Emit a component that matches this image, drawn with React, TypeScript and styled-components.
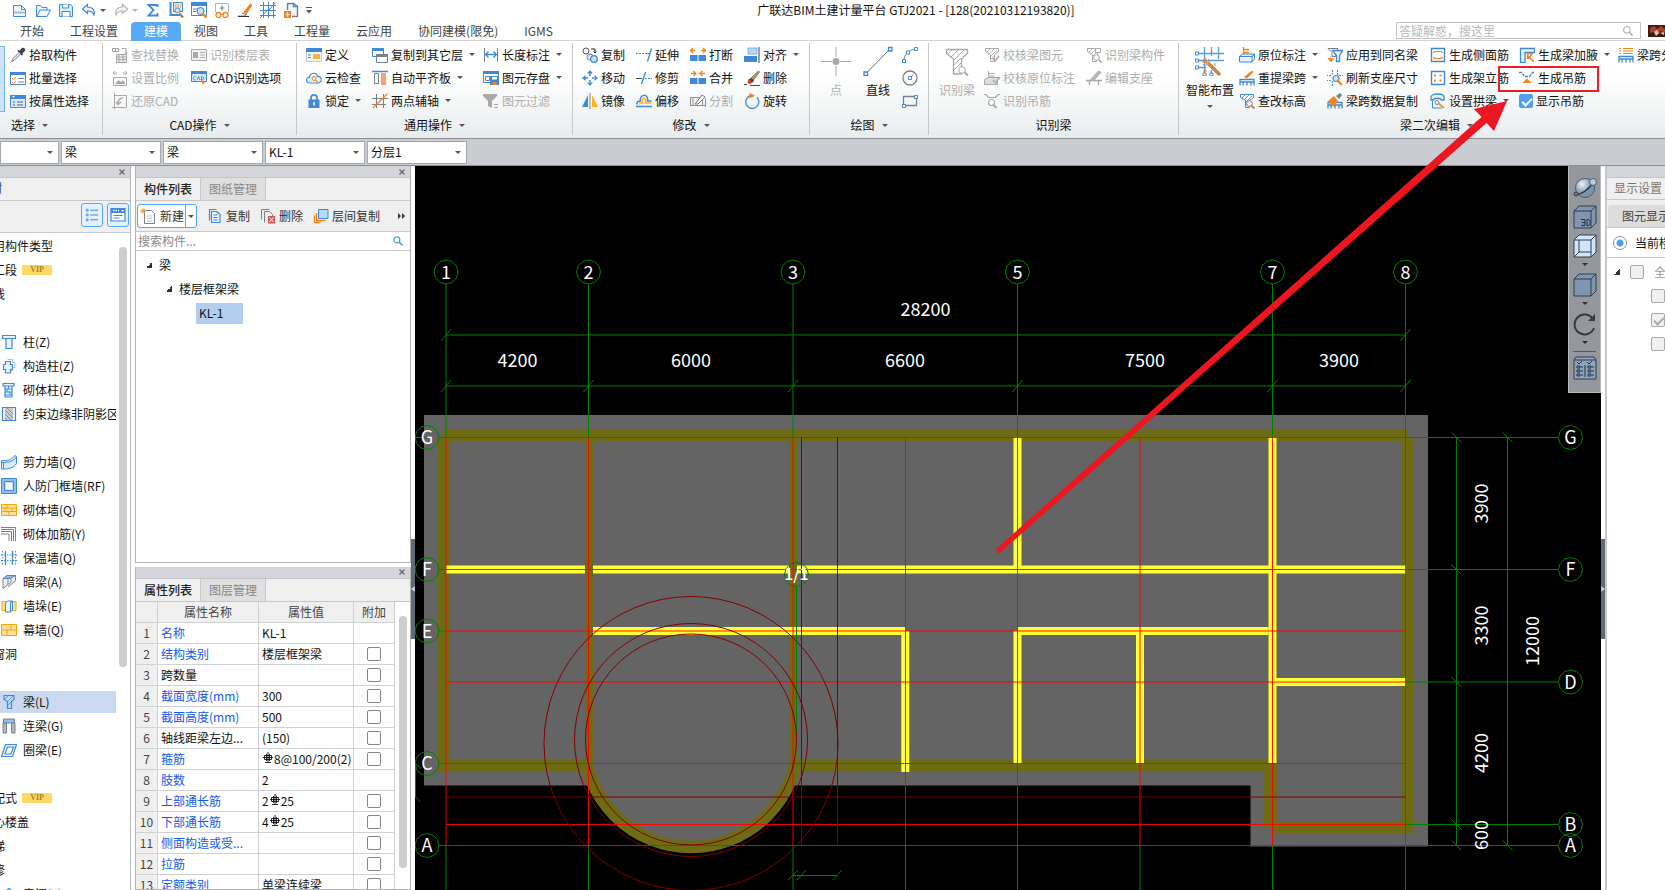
import React from 'react';
import styled, { createGlobalStyle, css } from 'styled-components';

const BLUE = '#3f8ad8';
const ORANGE = '#f5821f';
const GRAY = '#a9a9a9';
const SLATE = '#76838f';

const Global = createGlobalStyle`
  * { box-sizing: border-box; }
  html, body { margin: 0; padding: 0; }
  body {
    font: 12px/18px "Noto Sans CJK SC", "Noto Sans", sans-serif;
    color: #111;
    background: #fff;
  }
  button, input, select { font: inherit; color: inherit; margin: 0; }
  button { border: 0; padding: 0; background: none; cursor: pointer; }
`;

/* ---------- icons ---------- */

type Glyph = React.ReactNode;

const funnel = (c: string, lens: string | null): Glyph => (
  <>
    <path d="M1.5 1.5h13v3l-4 3v7h-4v-7l-5-3z" fill="none" stroke={c} />
    <path d="M3 5l3-3M5 7l5-5M7 9l6-6M7 12l3-3" stroke={c} strokeWidth=".8" />
    {lens && <><circle cx="10.5" cy="10.5" r="2.8" fill="#fff" stroke={lens} /><path d="M12.5 12.5l3 3" stroke={lens} strokeWidth="1.6" /></>}
  </>
);

const bench = (c: string): Glyph => <path d="M1 15.500V9.500h14V15.500M4 15.500V12M8 15.500V12M12 15.500V12M1 12h14" fill="none" stroke={c} strokeWidth="1.300" />;

const glyphs: Record<string, Glyph> = {
  newDoc: <><path d="M1.500 3.500h8l4 4v7h-12zM9.500 3.500v4h4" fill="#eef5fd" stroke={BLUE} /><path d="M2 9.500h11.500v2H2z" fill={BLUE} opacity=".5" /></>,
  open: <path d="M1.500 14.500v-11h4l1.500 2h5v2.500M1.500 14.500l3.500-6.500h10.500l-3.500 6.500z" fill="#eef5fd" stroke={BLUE} />,
  save: <><path d="M1.500 2.500h11l2 2v10h-13z" fill="#dcebfa" stroke={BLUE} /><path d="M4.500 2.500v3.500h6v-3.500M4 14.500v-5h8v5" fill="#fff" stroke={BLUE} /></>,
  undo: <path d="M6.500 2.500L1.500 7l5 4.500V9c4 0 5.500 1 6.500 4 1.500-4-1-8-6.500-8z" fill="#eef5fd" stroke={BLUE} strokeWidth="1.200" />,
  redo: <path d="M9.500 2.500L14.500 7l-5 4.500V9c-4 0-5.500 1-6.500 4-1.500-4 1-8 6.500-8z" fill="#f6f6f6" stroke="#b5b5b5" strokeWidth="1.200" />,
  sum: <path d="M12.500 5V3h-9l5 5-5 5.500h9V11" fill="none" stroke={BLUE} strokeWidth="1.800" />,
  calcView: <><path d="M2.500 0v13h10" fill="none" stroke={BLUE} strokeWidth="2" /><path d="M5.500.5h9v9h-9z" fill="#dcebfa" stroke={BLUE} /><path d="M7 3h6M7 5h6" stroke={ORANGE} strokeDasharray="1.500 1" /><circle cx="9.500" cy="8.500" r="2.500" fill="#cfe3f8" stroke={SLATE} /><path d="M11.500 11.500l3.500 4" stroke="#c8773a" strokeWidth="2.500" /></>,
  find: <><path d="M.5 1.500h15v12H.5z" fill="#fff" stroke={BLUE} /><path d="M0 0h16v4H0z" fill={BLUE} /><path d="M2 7h4M2 9.500h3" stroke={BLUE} /><circle cx="9.500" cy="9" r="3.500" fill="#cfe3f8" stroke="#3b6fb0" /><path d="M12 12l3.500 3.500" stroke={ORANGE} strokeWidth="2.500" /></>,
  glasses: <><path d="M1.500 10V1.500h13V10" fill="none" stroke="#aab6c2" /><path d="M8 3.500v5M5.500 6h5" stroke={SLATE} strokeWidth="1.200" /><circle cx="4.500" cy="13" r="2.500" fill="none" stroke={ORANGE} strokeWidth="1.300" /><circle cx="11.500" cy="13" r="2.500" fill="none" stroke={ORANGE} strokeWidth="1.300" /><path d="M7 12.500h2" stroke={ORANGE} /></>,
  brush: <><path d="M7 10l6.500-8 1.500 1-5.500 8.500z" fill={ORANGE} stroke={ORANGE} /><path d="M5 11l4 1.500-1.500 1.500H1" fill="none" stroke={SLATE} strokeWidth="1.200" /><path d="M1 14.500h11" stroke="#333" /></>,
  grid: <path d="M3.500 0v16M8.500 0v16M13.500 0v16M0 3.500h16M0 8.500h16M0 13.500h16M0 16L9 6.500M8.500 8.500l7-8" fill="none" stroke={BLUE} />,
  docPlus: <><path d="M4.500 8V1.500h6v3h4v10H9" fill="#eef5fd" stroke={SLATE} strokeWidth="1.400" /><path d="M10.500 1.500l4 3" stroke={BLUE} strokeWidth="1.500" /><path d="M1 9h7v7H1z" fill={ORANGE} /><path d="M4.500 10.500v4M2.500 12.500h4" stroke="#fff" strokeWidth="1.200" /></>,
  picker: <><path d="M9 4l3-3c2-1 4 1 3 3l-3 3z" fill="#444" /><path d="M8 3.500l4.500 4.500" stroke="#333" strokeWidth="1.600" /><path d="M9 5.500L3 11.500 1.500 14.500 4.500 13l6-6" fill="#dcebfa" stroke={SLATE} /></>,
  batch: <><path d="M.5 2.500h15v12H.5z" fill="#fff" stroke={BLUE} /><path d="M0 2h16v3H0z" fill={BLUE} /><path d="M2 8l1.500 1.500L6 7M2 12l1.500 1.500L6 11" fill="none" stroke={ORANGE} /><path d="M8 8.500h6M8 12h6" stroke={SLATE} /></>,
  attr: <><path d="M.5 2.500h15v12H.5z" fill="#dcebfa" stroke={BLUE} /><path d="M0 2h16v4H0z" fill={BLUE} /><path d="M2 3h3l-1.500 2z" fill="#fff" /><path d="M3 9h2M7 9h6M3 12h2M7 12h6" stroke="#3a5f8a" /></>,
  replace: <><path d="M.5 1.500h3v3h-3zM3.500 1.500h3v3h-3zM10 1.500h4v4" fill="none" stroke={GRAY} /><path d="M14 7V4M12.500 5.500l1.500 2 1.500-2" stroke={GRAY} fill="none" /><path d="M4.500 7.500h10v8h-10zM7 7.500v8M4.500 10h10M4.500 12.500h10M11 7.500v8" fill="#eee" stroke={GRAY} /></>,
  ratio: <><path d="M1 3h4M11 3h4M3 1L1 3l2 2M13 1l2 2-2 2" fill="none" stroke={GRAY} /><path d="M1.500 7.500h13v8h-13z" fill="none" stroke={GRAY} /><path d="M3 14l3.500-4 2.500 2 2-2 2.500 4z" fill={GRAY} /></>,
  restore: <><path d="M2.500 0v16M0 14.500h14M2.500 2.500h12v12" fill="none" stroke={GRAY} /><path d="M11 5c-4 0-5 2-5 6M4 9l2 2.500L9 9" fill="none" stroke={GRAY} strokeWidth="1.500" /></>,
  floorTable: <><path d="M.5 2.500h15v11H.5z" fill="#f4f4f4" stroke={GRAY} /><path d="M2 5h5v6H2z" fill={GRAY} /><path d="M9 5.500h5M9 8h5M9 10.500h5" stroke={GRAY} /></>,
  cadOpt: <><path d="M.5 1.500h15v10H.5z" fill="#dcebfa" stroke={BLUE} /><path d="M0 1h16v3H0z" fill={BLUE} /><path d="M4.500 6.500c-3 0-3 3.500 0 3.500M6 10l1.500-3.500L9 10M10.500 6.500v3.500c3 0 3-3.500 0-3.500z" fill="none" stroke={BLUE} /><path d="M10 10l5 2-2 1-1 2z" fill={ORANGE} /></>,
  define: <><path d="M.5 1.500h15v13H.5z" fill="#f0f6fc" stroke="#b9c9da" /><path d="M0 1h16v4H0z" fill={BLUE} /><path d="M2 8h3M2 10.500h3" stroke={SLATE} /><path d="M7 7h7v5H7z" fill="#f9b24a" /></>,
  cloud: <><path d="M4 13c-5 0-4-6-.5-5.500C4 2 11 2 11.500 6.500c5-.5 5 6.500 0 6.500z" fill="#eef5fd" stroke={BLUE} strokeWidth="1.200" /><circle cx="8" cy="8.500" r="2" fill="none" stroke={ORANGE} /><path d="M9.500 10l2 2" stroke={ORANGE} strokeWidth="1.500" /></>,
  lock: <><path d="M5 7V4.500c0-3.500 6-3.500 6 0V7" fill="none" stroke={BLUE} strokeWidth="1.800" /><path d="M2.500 6.500h11v8.500h-11z" fill={BLUE} /><path d="M8 9v3.500" stroke="#fff" strokeWidth="1.500" /></>,
  copyFloor: <><path d="M.5 1.500h11v8h-11z" fill="#fff" stroke={BLUE} /><path d="M0 1h12v3H0z" fill={BLUE} /><path d="M4.500 7.500h11v8h-11z" fill="#fff" stroke={SLATE} /><path d="M4 7h12v3H4z" fill={SLATE} /></>,
  alignSlab: <><path d="M0 1.500h16" stroke={BLUE} strokeWidth="1.500" /><path d="M2.500 3.500h4v10h-4z" fill="#fff" stroke={SLATE} /><path d="M9 3h5v12H9z" fill="#ff9f6e" /></>,
  twoPoint: <><path d="M4.500 1v14M11.500 1v14M0 5.500h16M0 11.500h14" stroke={SLATE} /><path d="M1 15L15 1" stroke={ORANGE} strokeWidth="1.300" /></>,
  length: <><path d="M1.500 1v14M14.500 1v14" stroke={SLATE} /><path d="M3 7.500h10M5.500 4.500l-3 3 3 3M10.500 4.500l3 3-3 3" fill="none" stroke={BLUE} strokeWidth="1.300" /></>,
  store: <><path d="M.5 1.500h15v11H.5z" fill="#fff" stroke={BLUE} /><path d="M0 1h16v3H0z" fill={BLUE} /><path d="M2.500 6.500h4v4h-4z" fill="#fff" stroke={SLATE} /><path d="M7 6h9v9H7z" fill={BLUE} /><path d="M9 7h5v2.500H9z" fill="#fff" /><path d="M9.500 12h4v3h-4z" fill={ORANGE} /></>,
  filter: <><path d="M0 1h14v2L9 8v7l-4-2V8L0 3z" fill={GRAY} /><path d="M11 11.500h4M11 14.500h4" stroke={GRAY} /></>,
  copy: <><circle cx="4" cy="4" r="3" fill="#fff" stroke="#555" /><circle cx="8" cy="10" r="3" fill="#dcebfa" stroke={SLATE} /><circle cx="12" cy="12" r="3.300" fill="#bfe0fb" stroke={BLUE} strokeWidth="1.300" /><path d="M9 2h4v4M11.500 4.500L13 6l1.500-1.500" fill="none" stroke="#222" /></>,
  move: <path d="M8 0l3 3.500H5zM8 16l3-3.500H5zM0 8l3.500-3v6zM16 8l-3.500-3v6zM7.200 3h1.600v3H7.200zM7.200 10h1.600v3H7.200zM3 7.200h3v1.600H3zM10 7.200h3v1.600h-3z" fill={BLUE} />,
  mirror: <><path d="M6 2v12H0z" fill={BLUE} /><path d="M10 2v12h6z" fill="#ffb21e" /><path d="M8 0v16" stroke={SLATE} /></>,
  extend: <><path d="M0 6.500h10" stroke={SLATE} strokeDasharray="2 1" /><path d="M15.500 1.500l-4 13" stroke={BLUE} strokeWidth="1.400" /><path d="M10 6.500h4" stroke={BLUE} /></>,
  trim: <><path d="M0 8.500h6" stroke="#444" /><path d="M9.500 2l-4 12" stroke={BLUE} strokeWidth="1.400" /><path d="M9 8.500h7" stroke={BLUE} strokeDasharray="2 1" /></>,
  offset: <><path d="M1 11.500c-.5-3 2-3.500 3.500-3.500C3 1 13 0 11.500 8h4" fill="none" stroke={BLUE} strokeWidth="1.500" /><path d="M4 11.500v-1.500h3C4.500 3.500 11 3.500 9.500 10h6" fill="none" stroke="#ffb21e" strokeWidth="1.500" /><path d="M0 13.500h16" stroke={BLUE} strokeWidth="1.500" /></>,
  breakIt: <><path d="M1 3.500h4M3 1L.5 3.500 3 6M11 3.500h4M13 1l2.500 2.500L13 6" fill="none" stroke={ORANGE} strokeWidth="1.400" /><path d="M0 8h7.500v6H0zM8.500 8H16v6H8.500z" fill={BLUE} /></>,
  merge: <><path d="M1 3.500h4M3.500 1L6 3.500 3.500 6M11 3.500h4M12.500 1L10 3.500 12.500 6" fill="none" stroke={ORANGE} strokeWidth="1.400" /><path d="M0 8h7.500v6H0zM8.500 8H16v6H8.500z" fill={BLUE} /></>,
  split: <><path d="M.5 4.500h12v8H.5zM3 4.500v8M0 12.500h16M15.500 5v9" fill="none" stroke="#909090" /><path d="M5 11l7-9 3 2-7 7z" fill="#fff" stroke="#777" /></>,
  align: <><path d="M4 1h9v6H4z" fill="#b9d9fb" stroke={BLUE} strokeWidth=".6" /><path d="M0 9h13v6H0z" fill={BLUE} /><path d="M15 0v16" stroke={SLATE} strokeWidth="1.500" /></>,
  erase: <><path d="M14.500 1l1 1-6 8-2.500-2z" fill="#c89a5a" stroke="#555" strokeWidth=".7" /><path d="M7 8l3 2.500-2 2.500-4-3z" fill="#444" /><path d="M5 9l3 3c-1 3-4 2-4.500 0z" fill="#d9411e" /><path d="M0 14.500h3M6 15.500h10" stroke="#444" /></>,
  rotate: <><path d="M9 2.500a6.500 6.500 0 1 0 4 2" fill="none" stroke={BLUE} strokeWidth="1.300" /><path d="M5.500 0l5.500 2.800-5.500 2.700z" fill={ORANGE} /></>,
  arc: <><path d="M2 14C2 8 6 2.500 14 2" fill="none" stroke={SLATE} /><path d="M.5 12.500h3v3h-3zM4.500 4h3v3h-3zM12.500.5h3v3h-3z" fill="#fff" stroke={BLUE} /></>,
  circle: <><circle cx="8" cy="8" r="7" fill="none" stroke={SLATE} strokeWidth="1.300" /><path d="M8 8l3.500-3.500" stroke={SLATE} /><path d="M6.500 6.500h3v3h-3z" fill="#fff" stroke={BLUE} /></>,
  rect: <><path d="M1.500 3.500h13v9h-13z" fill="none" stroke={SLATE} strokeWidth="1.300" /><path d="M.5 11.500h3v3h-3zM12.500 2.500h3v3h-3z" fill="#fff" stroke={BLUE} /></>,
  funnelCheck: <>{funnel(GRAY, null)}<path d="M8.500 11l2.500 3 4-5" fill="none" stroke={GRAY} strokeWidth="1.500" /></>,
  funnelBox: <>{funnel(GRAY, GRAY)}<path d="M9.500 1.500h5v4h-5z" fill="#fff" stroke={GRAY} /></>,
  applySame: <><path d="M1 1.500h10l-2 4v4H5v-4z" fill="#fff" stroke={SLATE} /><path d="M5.500 3.500h10l-3 5v6h-3v-6z" fill="#eef5fd" stroke={BLUE} strokeWidth="1.300" /><path d="M3.500 9v3M1 11.500h6l-3 3.500z" fill={ORANGE} stroke={ORANGE} strokeWidth=".6" /></>,
  stampGray: <><path d="M4.500 7.500V1M4.500 3.500h6M4.500 6h6" stroke={GRAY} fill="none" /><path d="M.5 9.500l3-2h12l-2 3v4H.5z" fill="#ddd" stroke={GRAY} /><path d="M9 10l2.500 3 4-5" stroke={GRAY} fill="none" strokeWidth="1.400" /></>,
  hangerFind: <><path d="M0 1.500h2l2.500 3h7l2.500-3h2" fill="none" stroke={GRAY} strokeWidth="1.200" /><circle cx="7.500" cy="9.500" r="3" fill="#fff" stroke={GRAY} strokeWidth="1.200" /><path d="M9.500 12l3 3" stroke={GRAY} strokeWidth="2" /></>,
  editSeat: <><path d="M5 9l7.500-8 2.500 1.500L8 10l-4 1z" fill="#bbb" stroke={GRAY} /><path d="M0 10.500h16M3.500 11v4M12.500 11v4" stroke={GRAY} strokeWidth="1.300" /></>,
  origMark: <><path d="M4.500 7V0M4.500 2.500H10M4.500 5.500H10" stroke={ORANGE} strokeWidth="1.300" /><path d="M.5 9.500l3-2.500h12l-2.500 3v5H.5zM.5 9.500H13l2.500-2.500v5L13 15" fill="#eaf3fc" stroke={BLUE} /></>,
  respan: <>{bench(BLUE)}<path d="M5 7l8-6.500 1.500 1.500L8 8.500z" fill={ORANGE} /></>,
  checkElev: <>{funnel(BLUE, SLATE)}<path d="M12 12.500l3 3" stroke={ORANGE} strokeWidth="1.800" /></>,
  refresh: <><path d="M5.500 0v4l-2 1.500H0M10.500 0v4l2 1.500H16M5.500 16v-4l-2-1.500H0" fill="none" stroke={BLUE} strokeWidth="1.200" strokeDasharray="2 1" /><circle cx="9" cy="8.500" r="3" fill="#cfe3f8" stroke={SLATE} strokeWidth="1.200" /><path d="M11 11l4 4" stroke={ORANGE} strokeWidth="2" /></>,
  spanCopy: <>{bench(BLUE)}<path d="M1 8l6-5 4 5-5 6z" fill={ORANGE} /><path d="M9 3l4-3 2 2-3 4z" fill={SLATE} /></>,
  sideBar: <><path d="M1.500 1.500h13v13h-13z" fill="#fff" stroke={BLUE} strokeWidth="1.400" /><path d="M3 5.500h1c0-1 .5-1 1-1h6c1 0 1 1 1 1h1M3 10.500h1c0 1 .5 1 1 1h6c1 0 1-1 1-1h1" fill="none" stroke={ORANGE} strokeWidth="1.200" /></>,
  erectBar: <><path d="M1.500 1.500h13v13h-13z" fill="#fff" stroke={BLUE} strokeWidth="1.400" /><path d="M4 4.500h2v2H4zM9.500 4.500h2v2h-2zM4 9.500h2v2H4zM9.500 9.500h2v2h-2z" fill={ORANGE} /></>,
  archBeam: <><path d="M1 7V4c0-4 13-4 13 0v3h-2.500L10 5.500H5L3.500 7z" fill="#eaf3fc" stroke={BLUE} strokeWidth="1.300" /><path d="M2.500 8v7h9" fill="none" stroke={BLUE} /><circle cx="7" cy="9.500" r="2" fill="#fff" stroke={SLATE} /><path d="M8 10l6 5" stroke="#e0a040" strokeWidth="2" /></>,
  haunch: <><path d="M1.500 15.500v-14h14v4h-9.500v10z" fill="#eaf3fc" stroke={BLUE} strokeWidth="1.300" /><path d="M14 6.500H8.500V12M9 12l4-5M9 9l6 6" stroke={ORANGE} strokeWidth="1.500" fill="none" /></>,
  hanger: <><path d="M0 2.500h2.500l3 4h5l3-4H16" fill="none" stroke={BLUE} strokeWidth="1.300" strokeDasharray="3 1" /><path d="M8 8.500l4.500 4.500h-9z" fill={ORANGE} /></>,
  spanCls: <>{bench(BLUE)}<path d="M1 1.500h2M5 1.500h10M1 4h2M5 4h10M1 6.500h2M5 6.500h10" stroke={ORANGE} /></>,
  colT: <path d="M1.500 1.500h13v3h-3.500v10H5v-10H1.500zM5 4.500h6" fill="#eaf3fc" stroke={BLUE} strokeWidth="1.200" />,
  colCross: <><path d="M6.500 1.500h5v3h2.500v5h-2.500v3h-4" fill="none" stroke="#9cc4ee" /><path d="M4.500 3.500h5v3h2v5h-2v3.500h-5V11.500h-2v-5h2z" fill="#eaf3fc" stroke={BLUE} strokeWidth="1.200" /></>,
  colBrick: <><path d="M2 1.500h11v2.500H2zM4 4h7v11H4z" fill="#eaf3fc" stroke={BLUE} strokeWidth="1.200" /><path d="M4 7h7M4 10h7M4 13h7M7.500 4v3M6 7v3M9 10v3" stroke={BLUE} /></>,
  hatch: <><path d="M1.500 1.500h13v13h-13z" fill="#eaf3fc" stroke={BLUE} strokeWidth="1.200" /><path d="M4 2h8v12H4z" fill="#ccc" /><path d="M4 4l8 8M4 8l6 6M6 2l6 6M4 12l2 2" stroke="#888" /></>,
  wall: <><path d="M.5 6.500c7 1 11-1.500 13-5l2 1v7c-2 4-8 6-15 5.500z" fill="#dcebfa" stroke={BLUE} /><path d="M.5 8.500h2v6M2.500 8.500c6 0 10-1.500 13-5.500" fill="none" stroke={BLUE} /></>,
  gateWall: <><path d="M.5.5h15v15H.5z" fill="#8fbdf0" stroke={BLUE} /><path d="M3.500 3.500h9v9h-9z" fill="#c5dff8" stroke={BLUE} /><path d="M5 5h6v6.500H5z" fill="#fff" /></>,
  brick: <><path d="M.5 2.500h15v11H.5z" fill="#ffe19a" stroke="#f5a800" /><path d="M.5 6h15M.5 9.500h15M6 2.500V6M11 6v3.500M4 6v3.500M8 9.500v4" stroke="#f5a800" /></>,
  rebarL: <><path d="M0 1.500h14.500V15" fill="none" stroke={SLATE} /><path d="M0 3.500h12.500V15M0 5.500h10.500V15" fill="none" stroke={BLUE} /><path d="M0 8h8v7" fill="none" stroke={SLATE} /></>,
  insul: <><path d="M4.500 1v14M11.500 1v14" stroke={BLUE} strokeWidth="1.300" /><path d="M1.500 1v14M14.500 1v14M0 5h16M0 10.500h16" stroke={BLUE} strokeDasharray="1.500 1.500" /></>,
  darkBeam: <><path d="M2 4.500l4-3h8.500l-4 3z" fill="#8fbdf0" stroke={BLUE} /><path d="M2 4.500h5l0 6-5 4zM7 10.500l3-2.500V4l4.500-2.500v5L7 13" fill="#eef1f4" stroke={SLATE} /></>,
  pier: <><path d="M1 3.500h14v9H1z" fill="#ffe19a" stroke="#f5a800" /><path d="M4.500 5l2-2h5l-2 2v9h-5zM9.500 5l2-2v9l-2 2" fill="#eaf3fc" stroke={BLUE} /></>,
  curtain: <><path d="M.5 2.500h15v11H.5z" fill="#ffe19a" stroke="#f5a800" /><path d="M.5 8h15M10 2.500V8M6 8v5.500" stroke="#f5a800" /></>,
  beam: <><path d="M3 1.500h10v4l-2.500 2v7h-4v-7L3 5.500z" fill="#bcd8f6" stroke={BLUE} strokeWidth="1.200" /><path d="M4 5l3-3M7 7l5-5M7 11l3-3" stroke={BLUE} strokeWidth=".7" /></>,
  linkBeam: <><path d="M2.500 1h11v4h-11z" fill="#8fbdf0" stroke={SLATE} /><path d="M2 5h3.500v10H2zM10.500 5H14v10h-3.500z" fill="#aeb8c1" stroke={SLATE} /></>,
  ringBeam: <path d="M4.500 2.500h11l-4 12h-11zM6.500 5h6l-2.500 7h-6z" fill="#eaf3fc" fillRule="evenodd" stroke={BLUE} strokeWidth="1.200" />,
  room: <path d="M1 8l7-6 7 6h-3v7H4V8z" fill="#8fbdf0" stroke={BLUE} />,
  listView: <><path d="M1.500 1.500h2v2h-2zM1.500 7h2v2h-2zM1.500 12.500h2v2h-2z" fill="none" stroke={BLUE} /><path d="M6 2.500h9M6 8h9M6 13.500h9" stroke={BLUE} strokeWidth="1.200" /></>,
  cardView: <><path d="M1 1.500h14v12.500H1z" fill="#fff" stroke={BLUE} strokeWidth="1.200" /><path d="M1 1h14v5H1z" fill={BLUE} /><path d="M3 3.500h6" stroke="#fff" strokeDasharray="1.500 1" strokeWidth="1.500" /><path d="M11 3h3l-1.500 2z" fill="#fff" /><path d="M3.500 8.500h9M3.500 11h6" stroke={BLUE} /></>,
  newItem: <><path d="M4.500 2.500h7l3 3v10h-10z" fill="#fff" stroke={SLATE} /><path d="M7 8h5M7 10.500h5M7 13h5" stroke="#b8c0c8" /><path d="M3 0v6M0 3h6M1 1l4 4M5 1L1 5" stroke="#f9a01b" /></>,
  copyBlue: <><path d="M2.500 12.500v-11h7" fill="none" stroke={BLUE} strokeWidth="1.200" /><path d="M4.500 3.500h5.500l3 3v8h-8.500z" fill="#eaf3fc" stroke={BLUE} strokeWidth="1.200" /><path d="M6.500 7h4M6.500 9.500h4M6.500 12h4" stroke={BLUE} /></>,
  deleteRed: <><path d="M1.500 11.500v-10h8M4.500 14.500v-11h5l3 3v2" fill="none" stroke={SLATE} /><path d="M8 8h7v7.500H8z" fill="#e05252" /><path d="M9.500 9.500l4 4.500M13.500 9.500l-4 4.500" stroke="#fff" /></>,
  layerCopy: <><path d="M5.500 1.500h9.500v9H5.500z" fill="#b9d9fb" stroke={BLUE} /><path d="M3.500 5v7.500h9M1.500 7.500v7h6" fill="none" stroke={ORANGE} strokeWidth="1.300" /></>,
  lens: <><circle cx="6.500" cy="6.500" r="4" fill="none" stroke="#4f9fd0" strokeWidth="1.600" /><path d="M9.500 9.500l4.500 4.500" stroke="#4f9fd0" strokeWidth="2" /></>,
  lensGray: <><circle cx="6.500" cy="6.500" r="4.500" fill="none" stroke="#999" strokeWidth="1.200" /><path d="M10 10l4 4" stroke="#999" strokeWidth="1.500" /></>,
};

const bigGlyphs: Record<string, Glyph> = {
  point: <><path d="M0 15.500h11M19 15.500h11M15 1v10M15 20v10" stroke={GRAY} /><circle cx="15" cy="15.500" r="3.500" fill={GRAY} /></>,
  line: <><path d="M3 27.500L27 3" stroke="#5f6b76" /><path d="M1 26h3.500v3.500H1zM25.500 1.500H29V5h-3.500z" fill="#fff" stroke={BLUE} strokeWidth="1.300" /></>,
  beamBig: <><path d="M4.500 3.500h21v4l-6 5.500v15h-8V13l-7-5.500z" fill="none" stroke={GRAY} strokeWidth="1.300" /><path d="M6 8l5-5M9 11l8-8M12 14L23 3M12 19l7-7M12 24l7-7" stroke={GRAY} /><circle cx="20" cy="24" r="3.300" fill="#fff" stroke={GRAY} /><path d="M22.500 26.500l3.500 3" stroke={GRAY} strokeWidth="2" /></>,
  smart: <><path d="M1 7.500h28M1 14.500h28M1 21.500h10M9.500 1v28M16.500 1v9M16.500 24v5M23.500 1v12" stroke="#5a9be0" strokeWidth="1.300" /><path d="M.5 6h3v3h-3zM.5 13h3v3h-3zM.5 20h3v3h-3zM8 27h3v3H8zM15 27h3v3h-3z" fill="#fff" stroke={BLUE} /><path d="M13 17l12 12" stroke="#c98447" strokeWidth="3.500" /><path d="M11 12v8M7 16h8M8 13l6 6M14 13l-6 6M10 23v4M8 25h4M20 17v3" stroke={ORANGE} /></>,
};

const Svg16 = styled.svg<{ $size?: number }>`
  width: ${p => p.$size ?? 16}px;
  height: ${p => p.$size ?? 16}px;
  flex: none;
  display: block;
`;
const Icon = ({ name, size = 16 }: { name: string; size?: number }) => (
  <Svg16 $size={size} viewBox="0 0 16 16" aria-hidden="true">{glyphs[name]}</Svg16>
);

const Caret = styled.i<{ $color?: string }>`
  flex: none;
  border: 3px solid transparent;
  border-top-color: ${p => p.$color ?? '#555'};
  border-bottom-width: 0;
`;

/* ---------- page frame ---------- */

const Page = styled.div`
  position: relative;
  display: flex;
  flex-direction: column;
  height: 100vh;
  overflow: hidden;
`;

const TitleBar = styled.header`
  display: grid;
  grid-template-columns: 1fr auto 1fr;
  align-items: center;
  height: 22px;
  padding: 0 0 2px 12px;
`;
const QuickBar = styled.div`
  display: flex;
  align-items: center;
  gap: 7px;
`;
const QuickButton = styled.button`
  display: flex;
  align-items: center;
  gap: 3px;
`;
const AppTitle = styled.h1`
  margin: 0 0 0 155px;
  font-size: 12px;
  font-weight: 400;
  white-space: nowrap;
`;

const TabBar = styled.nav`
  display: flex;
  height: 19px;
  padding-left: 7px;
  border-bottom: 1px solid #d5d5d5;
`;
const Tab = styled.a<{ $active?: boolean }>`
  padding: 0 13px;
  height: 19px;
  line-height: 17px;
  color: ${p => (p.$active ? '#fff' : '#444')};
  background: ${p => (p.$active ? '#5aa8f8' : 'transparent')};
  border-radius: 4px 4px 0 0;
  text-decoration: none;
  white-space: nowrap;
`;
const HelpSearch = styled.label`
  display: flex;
  align-items: center;
  width: 245px;
  height: 17px;
  margin-left: auto;
  padding: 0 6px 0 2px;
  border: 1px solid #c4c4c4;
  input {
    flex: 1;
    min-width: 0;
    height: 15px;
    padding: 0;
    border: 0;
    outline: 0;
    background: none;
  }
  input::placeholder { color: #b9b9b9; opacity: 1; }
`;
const Avatar = styled.svg`
  width: 17px;
  height: 12px;
  margin: 3px 0 0 7px;
`;

const Ribbon = styled.div`
  display: flex;
  flex: none;
  height: 98px;
  padding-top: 2px;
  overflow: hidden;
  border-bottom: 1px solid #8d8f92;
  background: linear-gradient(#fff 35%, #e8ecee);
`;
const RibbonGroup = styled.section<{ $w: number }>`
  display: flex;
  flex-direction: column;
  flex: none;
  width: ${p => p.$w}px;
  height: 92px;
  border-right: 1px solid #c6c8ca;
`;
const GroupTools = styled.div<{ $pad?: number }>`
  display: flex;
  height: 69px;
  padding-left: ${p => p.$pad ?? 9}px;
`;
const GroupLabel = styled.div<{ $start?: boolean }>`
  display: flex;
  align-items: center;
  justify-content: ${p => (p.$start ? 'flex-start' : 'center')};
  gap: 7px;
  height: 23px;
  padding: 3px 0 0 ${p => (p.$start ? 11 : 0)}px;
`;
const ToolColumn = styled.div<{ $w?: number }>`
  display: flex;
  flex-direction: column;
  flex: none;
  width: ${p => (p.$w ? `${p.$w}px` : 'auto')};
`;
const toolRow = css`
  display: flex;
  align-items: center;
  gap: 3px;
  height: 23px;
  white-space: nowrap;
`;
const ToolButton = styled.button`
  ${toolRow}
  &:disabled { color: #adadad; cursor: default; }
  i { margin-left: 3px; }
`;
const ToolCheck = styled.label`${toolRow}`;
const BigButton = styled.button<{ $w: number }>`
  display: flex;
  flex-direction: column;
  align-items: center;
  flex: none;
  width: ${p => p.$w}px;
  padding-top: 3px;
  white-space: nowrap;
  svg { width: 30px; height: 30px; margin-bottom: 5px; }
  i { margin-top: 6px; }
  &:disabled { color: #adadad; cursor: default; }
`;
const CutButton = styled.button`
  width: 5px;
  height: 66px;
  margin: 3px 5px 0 0;
  border: 1px solid #79b5f0;
  border-left: 0;
  background: #cce4fb;
`;
const Spacer = styled.div<{ $w: number }>`flex: none; width: ${p => p.$w}px;`;

const CheckBox = styled.input<{ $tone?: string }>`
  appearance: none;
  position: relative;
  flex: none;
  width: 14px;
  height: 14px;
  border: 1px solid ${p => p.$tone ?? '#858585'};
  border-radius: 2px;
  background: ${p => (p.disabled ? '#f0f0f0' : '#fff')};
  &:checked { ${p => !p.disabled && css`background: #4f9ff5; border-color: #4f9ff5;`} }
  &:checked::after {
    content: '';
    position: absolute;
    left: 4px;
    top: 1px;
    width: 4px;
    height: 8px;
    border: solid ${p => (p.disabled ? '#aaa' : '#fff')};
    border-width: 0 2px 2px 0;
    transform: rotate(45deg);
  }
`;

const ContextBar = styled.div`
  display: flex;
  align-items: center;
  flex: none;
  gap: 2px;
  height: 27px;
  background: #c9ccd1;
  border-bottom: 1px solid #8d8f92;
`;
const ComboWrap = styled.span<{ $w: number }>`
  position: relative;
  width: ${p => p.$w}px;
  i { position: absolute; right: 6px; top: 10px; pointer-events: none; }
`;
const ComboSelect = styled.select`
  appearance: none;
  display: block;
  width: 100%;
  height: 23px;
  padding: 0 16px 0 3px;
  border: 1px solid #a5a8ac;
  border-radius: 0;
  background: #fff;
`;

const Body = styled.main`
  display: flex;
  flex: 1;
  min-height: 0;
`;

/* ---------- docked panels ---------- */

const DockStrip = styled.div`
  display: flex;
  align-items: center;
  justify-content: flex-end;
  flex: none;
  height: 12px;
  padding-right: 5px;
  background: #d4d5db;
  border-bottom: 1px solid #c3c5ca;
`;
const CloseButton = styled.button`
  display: flex;
  svg { width: 6px; height: 6px; }
`;
const Close = () => (
  <CloseButton aria-label="关闭">
    <svg viewBox="0 0 6 6"><path d="M.5.5l5 5M5.500.5l-5 5" stroke="#666" strokeWidth="1.300" /></svg>
  </CloseButton>
);

const NavPanel = styled.aside`
  display: flex;
  flex-direction: column;
  flex: none;
  width: 131px;
  overflow: hidden;
  border-right: 1px solid #b9bcc4;
`;
const NavTitle = styled.div`
  height: 22px;
  margin-left: -34px;
  font-weight: 700;
  line-height: 20px;
  color: #56609c;
`;
const NavHead = styled.div`
  flex: none;
  background: #efefef;
  border-bottom: 1px solid #c6c8ca;
`;
const NavTools = styled.div`
  display: flex;
  justify-content: flex-end;
  flex: none;
  gap: 4px;
  height: 32px;
  padding: 2px 1px 0 0;
  background: #efefef;
  border-bottom: 1px solid #c6c8ca;
`;
const ViewButton = styled.button`
  display: flex;
  align-items: center;
  justify-content: center;
  width: 22px;
  height: 24px;
  border: 1px solid #5aa8f8;
  border-radius: 3px;
  background: #e3f0fd;
`;
const NavBody = styled.div`
  display: flex;
  flex: 1;
  min-height: 0;
`;
const NavList = styled.ul`
  width: 116px;
  margin: 0;
  padding: 2px 0 0;
  list-style: none;
  overflow: hidden;
`;
const NavRow = styled.li<{ $cat?: boolean; $active?: boolean }>`
  display: flex;
  align-items: center;
  gap: ${p => (p.$cat ? 5 : 6)}px;
  height: 22px;
  margin-bottom: 2px;
  padding-left: ${p => (p.$cat ? 0 : 1)}px;
  background: ${p => (p.$active ? '#cad9ef' : 'transparent')};
  white-space: nowrap;
  span { margin-left: ${p => (p.$cat ? '-19px' : 0)}; }
`;
const Vip = styled.b`
  width: 30px;
  height: 10px;
  background: #ffd966;
  color: #a5832a;
  font: 700 8px/10px "Liberation Serif", serif;
  text-align: center;
`;
const ScrollThumb = styled.div<{ $top: number; $h: string; $left: number }>`
  flex: none;
  width: 8px;
  height: ${p => p.$h};
  margin: ${p => p.$top}px 0 0 ${p => p.$left}px;
  border-radius: 4px;
  background: #cdcdcd;
`;

const MidColumn = styled.div`
  display: flex;
  flex-direction: column;
  flex: none;
  gap: 4px;
  width: 276px;
  margin-left: 4px;
`;
const DockPanel = styled.section<{ $grow: number }>`
  display: flex;
  flex-direction: column;
  flex: ${p => p.$grow} 1 0;
  min-height: 0;
  overflow: hidden;
  border: 1px solid #b0b2b6;
  border-top: 0;
`;
const PanelTabs = styled.div`
  display: flex;
  flex: none;
  height: 23px;
  background: #efefef;
  border-bottom: 1px solid #c6c8ca;
`;
const PanelTab = styled.button<{ $active?: boolean }>`
  width: 65px;
  font-weight: ${p => (p.$active ? 500 : 400)};
  color: ${p => (p.$active ? '#222' : '#888')};
  background: ${p => (p.$active ? '#efefef' : '#dfdfdf')};
  border-right: 1px solid #c6c8ca;
`;
const ListTools = styled.div`
  display: flex;
  align-items: center;
  flex: none;
  height: 31px;
  padding: 0 2px 0 1px;
  background: #efefef;
  border-bottom: 1px solid #c6c8ca;
`;
const SplitButton = styled.span`
  display: flex;
  height: 24px;
  border: 1px solid #5aa8f8;
  border-radius: 3px;
  background: #fff;
  button { display: flex; align-items: center; gap: 4px; color: #333; }
  button:first-child { padding: 0 1px 0 2px; }
  button:last-child { padding: 0 2px; border-left: 1px solid #5aa8f8; }
`;
const ListTool = styled.button`
  display: flex;
  align-items: center;
  gap: 3px;
  margin-left: 10px;
  color: #333;
  white-space: nowrap;
`;
const MoreButton = styled.button`
  margin-left: auto;
  width: 10px;
  svg { display: block; width: 8px; height: 6px; }
`;
const ListSearch = styled.label`
  display: flex;
  align-items: center;
  flex: none;
  height: 19px;
  padding: 0 6px 0 2px;
  border-bottom: 1px solid #c6c8ca;
  input { flex: 1; min-width: 0; height: 18px; padding: 0; border: 0; outline: 0; }
  input::placeholder { color: #888; opacity: 1; }
`;
const Tree = styled.ul`
  margin: 0;
  padding: 2px 0 0;
  list-style: none;
`;
const TreeRow = styled.li<{ $indent: number }>`
  display: flex;
  align-items: center;
  gap: 7px;
  height: 24px;
  padding-left: ${p => p.$indent}px;
`;
const Twisty = styled.i`
  flex: none;
  width: 6px;
  height: 6px;
  background: linear-gradient(135deg, transparent 50%, #333 50%);
`;
const TreeLeaf = styled.span`
  width: 47px;
  height: 21px;
  padding-left: 3px;
  line-height: 20px;
  background: #b3cdee;
`;

const TableArea = styled.div`
  display: flex;
  flex: 1;
  min-height: 0;
`;
const PropTable = styled.table`
  width: 259px;
  align-self: flex-start;
  border-collapse: separate;
  border-spacing: 0;
  table-layout: fixed;
  th, td {
    height: 21px;
    padding: 0 3px;
    line-height: 18px;
    border-right: 1px solid #cfd1d3;
    border-bottom: 1px solid #cfd1d3;
    white-space: nowrap;
    overflow: hidden;
    text-align: left;
    font-weight: 400;
  }
  thead th { background: #efefef; color: #444; text-align: center; }
  tbody th { background: #efefef; color: #444; text-align: center; padding: 0; }
  td:last-child { text-align: center; padding: 0; }
  td input { display: block; margin: 0 auto; }
`;
const PropName = styled.td<{ $plain?: boolean }>`
  color: ${p => (p.$plain ? '#111' : '#1459f5')};
`;
const RebarSvg = styled.svg`
  width: 10px;
  height: 12px;
  margin: 0 1px;
`;
const Rebar = () => (
  <RebarSvg viewBox="0 0 10 12" role="img" aria-label="三级钢">
    <path d="M1.500 3.500v4h7v-4zM5 0v10.500M3.500 2v7M6.500 2v7M0 5.500h10M2 10.500h6" fill="none" stroke="#111" strokeWidth=".9" />
  </RebarSvg>
);

const Gutter = styled.div`
  flex: none;
  width: 4px;
  padding-top: 373px;
  button {
    display: flex;
    align-items: center;
    height: 100px;
    background: #606b78;
    color: #c9ced4;
  }
  svg { width: 4px; height: 6px; }
`;

const Viewport = styled.div`
  position: relative;
  flex: 1;
  min-width: 0;
  overflow: hidden;
  background: #000;
`;
const Drawing = styled.svg`
  display: block;
  width: 1186px;
  height: 724px;
`;
const ViewTools = styled.div`
  position: absolute;
  right: 0;
  top: 0;
  display: flex;
  flex-direction: column;
  align-items: center;
  width: 33px;
  height: 227px;
  padding-top: 10px;
  border: 1px solid #b7b9bc;
  border-width: 0 1px 1px;
  background: #94979b;
  button { display: flex; flex-direction: column; align-items: center; }
  svg { width: 24px; height: 24px; margin-bottom: 5px; }
  i { margin-bottom: 7px; }
  hr { width: 23px; margin: 0 0 4px; border: 0; border-top: 1px solid #55595e; }
`;

const DisplayPanel = styled.aside`
  flex: none;
  width: 60px;
  overflow: hidden;
  border-left: 2px solid #c3c7ce;
  white-space: nowrap;
`;
const DisplayTitle = styled.div`
  height: 22px;
  padding-left: 7px;
  line-height: 20px;
  color: #777;
  background: #efefef;
  border-bottom: 1px solid #c6c8ca;
`;
const DisplayTabs = styled.div`
  height: 28px;
  padding: 5px 0 0 1px;
  background: #efefef;
  border-bottom: 1px solid #c6c8ca;
  button {
    width: 90px;
    height: 22px;
    padding-left: 14px;
    text-align: left;
    background: #dcdcdc;
    color: #444;
    border-radius: 3px 3px 0 0;
  }
`;
const RadioRow = styled.label`
  display: flex;
  align-items: center;
  gap: 8px;
  height: 30px;
  padding-left: 6px;
  border-bottom: 1px solid #c6c8ca;
`;
const Radio = styled.input`
  appearance: none;
  flex: none;
  width: 14px;
  height: 14px;
  border: 1px solid #909090;
  border-radius: 50%;
  background: radial-gradient(#4f9ff5 0 3px, #fff 4px);
`;
const DisplayRow = styled.label<{ $indent: number }>`
  display: flex;
  align-items: center;
  gap: 10px;
  height: 24px;
  padding-left: ${p => p.$indent}px;
  color: #999;
`;
const DisplayTree = styled.div`padding-top: 2px;`;

const Annotation = styled.svg`
  position: absolute;
  left: 0;
  top: 0;
  width: 1665px;
  height: 890px;
  pointer-events: none;
`;

/* ---------- ribbon data ---------- */

type Tool = { icon: string; text: string; off?: boolean; menu?: boolean };
const t = (icon: string, text: string, flags = ''): Tool => ({
  icon, text, off: flags.includes('x'), menu: flags.includes('m'),
});

const Tools = ({ items, w }: { items: Tool[]; w?: number }) => (
  <ToolColumn $w={w}>
    {items.map(it => (
      <ToolButton key={it.text || it.icon} disabled={it.off} aria-label={it.text || it.icon}>
        <Icon name={it.icon} />
        {it.text}
        {it.menu && <Caret />}
      </ToolButton>
    ))}
  </ToolColumn>
);

const Big = ({ icon, text, w, off, menu }: { icon: string; text: string; w: number; off?: boolean; menu?: boolean }) => (
  <BigButton $w={w} disabled={off}>
    <svg viewBox="0 0 30 30" aria-hidden="true">{bigGlyphs[icon]}</svg>
    {text}
    {menu && <Caret />}
  </BigButton>
);

const navRows: Array<{ text?: string; icon?: string; vip?: boolean; active?: boolean }> = [
  { text: '常用构件类型' }, { text: '施工段', vip: true }, { text: '轴线' }, {},
  { icon: 'colT', text: '柱(Z)' }, { icon: 'colCross', text: '构造柱(Z)' }, { icon: 'colBrick', text: '砌体柱(Z)' }, { icon: 'hatch', text: '约束边缘非阴影区' }, {},
  { icon: 'wall', text: '剪力墙(Q)' }, { icon: 'gateWall', text: '人防门框墙(RF)' }, { icon: 'brick', text: '砌体墙(Q)' }, { icon: 'rebarL', text: '砌体加筋(Y)' },
  { icon: 'insul', text: '保温墙(Q)' }, { icon: 'darkBeam', text: '暗梁(A)' }, { icon: 'pier', text: '墙垛(E)' }, { icon: 'curtain', text: '幕墙(Q)' },
  { text: '门窗洞' }, {},
  { icon: 'beam', text: '梁(L)', active: true }, { icon: 'linkBeam', text: '连梁(G)' }, { icon: 'ringBeam', text: '圈梁(E)' }, {},
  { text: '装配式', vip: true }, { text: '空心楼盖' }, { text: '楼梯' }, { text: '装修' }, { icon: 'room', text: '房间(F)' },
];

const props: Array<{ name: string; value?: React.ReactNode; plain?: boolean; noBox?: boolean }> = [
  { name: '名称', value: 'KL-1', noBox: true },
  { name: '结构类别', value: '楼层框架梁' },
  { name: '跨数量', plain: true },
  { name: '截面宽度(mm)', value: '300' },
  { name: '截面高度(mm)', value: '500' },
  { name: '轴线距梁左边...', value: '(150)', plain: true },
  { name: '箍筋', value: <><Rebar />8@100/200(2)</> },
  { name: '肢数', value: '2', noBox: true },
  { name: '上部通长筋', value: <>2<Rebar />25</> },
  { name: '下部通长筋', value: <>4<Rebar />25</> },
  { name: '侧面构造或受...' },
  { name: '拉筋' },
  { name: '定额类别', value: '单梁连续梁' },
];

/* ---------- floor plan ---------- */

const bubble = (cx: number, cy: number) =>
  Array.from({ length: 12 }, (_, i) => {
    const a = (i * Math.PI) / 6;
    return `${(cx + 12 * Math.cos(a)).toFixed(1)},${(cy + 12 * Math.sin(a)).toFixed(1)}`;
  }).join(' ');

const gridX: Array<[string, number]> = [['1', 446], ['2', 588.5], ['3', 793], ['5', 1017.5], ['7', 1272.5], ['8', 1405.5]];
const rightY: Array<[string, number]> = [['G', 437.5], ['F', 569.5], ['D', 682], ['B', 824.5], ['A', 845.5]];
const leftY: Array<[string, number]> = [['G', 437.5], ['F', 569.5], ['E', 631], ['C', 763.5], ['A', 845.5]];
const allX = [446, 588.5, 793, 905.5, 1017.5, 1140, 1272.5, 1405.5];
const allY = [437.5, 569.5, 631, 682, 763.5, 824.5, 845.5];
const dimX = [446, 588.5, 793, 1017.5, 1272.5, 1405.5];

const outerWalls = [
  [444, 429, 963, 12], [438, 438, 12, 334], [585, 441, 8, 331], [789, 441, 8, 331],
  [438, 760, 148, 12], [796, 760, 476, 12], [1264, 763, 13, 64], [1271, 821, 143, 12], [1401, 437, 13, 396],
];
const innerBeams = [
  [446, 565.500, 139, 8], [593, 565.500, 196, 8], [797, 565.500, 608.500, 8],
  [593, 627, 312, 8], [901.300, 631, 8, 141], [1013.500, 437, 8, 129], [1013.500, 631, 8, 132],
  [1017.500, 627, 251, 8], [1136, 631, 8, 132], [1268.500, 437, 8, 326], [1272, 678, 133.500, 8],
];
const topDims: Array<[string, number]> = [['4200', 517.5], ['6000', 691], ['6600', 905], ['7500', 1145], ['3900', 1339]];
const sideDims: Array<[string, number, number]> = [['3900', 1488, 503.5], ['3300', 1488, 625.5], ['4200', 1488, 753], ['600', 1488, 835], ['12000', 1539, 641]];

const FloorPlan = () => (
  <Drawing viewBox="415 166 1186 724" fontFamily='"Noto Sans CJK SC", sans-serif' fontSize="18" fill="none" textAnchor="middle">
    <defs><clipPath id="below"><rect x="560" y="764" width="260" height="110" /></clipPath></defs>
    <g fill="#646464">
      <path d="M424 415h1004v431.500h-177.500V785.500H424z" />
      <circle cx="691" cy="739.500" r="108" clipPath="url(#below)" />
    </g>
    <g fill="#6d6c15">{outerWalls.map(([x, y, w, h], i) => <rect key={i} x={x} y={y} width={w} height={h} />)}</g>
    <rect x="593" y="762" width="196" height="10" fill="#646464" />
    <circle cx="691" cy="739.500" r="107.500" stroke="#6d6c15" strokeWidth="12.500" clipPath="url(#below)" />
    <g fill="#ffff33">{innerBeams.map(([x, y, w, h], i) => <rect key={i} x={x} y={y} width={w} height={h} />)}</g>
    <g stroke="#008000">
      {dimX.map(x => <path key={x} d={`M${x} 284V437.500`} />)}
      {dimX.map(x => <path key={x} d={`M${x - 5} 392l10-12`} />)}
      <path d="M441 341l10-12M1400.500 341l10-12" />
      {allX.map(x => <path key={x} d={`M${x} 845.500V890`} />)}
      <path d="M446 335H1405.500M446 386H1405.500" />
      {rightY.map(([n, y]) => <path key={n} d={`M1405.500 ${y}H1558M1451.500 ${y - 5}l10 10`} />)}
      <path d="M1456.500 437.500V845.500M1507.500 437.500V845.500M1502.500 432.500l10 10M1502.500 840.500l10 10" />
      {leftY.map(([n, y]) => <path key={n} d={`M439 ${y}h7`} />)}
      <path d="M415.500 765v32l5 5M415 763.500l6 5M415 437.500h12" />
      <path d="M793 875.500h44.500M788 880l10-10M797 880l9-10M833 880l9-10" />
      <path d="M796.500 586v154" />
    </g>
    <g stroke="#ff0000">
      {allX.map(x => <path key={x} d={`M${x} 437.500V845.500`} strokeOpacity=".9" />)}
      {allY.map(y => <path key={y} d={`M446 ${y}H1405.500`} strokeOpacity=".9" />)}
    </g>
    <g stroke="#800000">
      <path d="M801.500 437.500V845.500M837.500 437.500V845.500M446 797H1405.500" />
      <circle cx="691" cy="743.500" r="147" />
      <circle cx="691" cy="740" r="116.500" />
      <circle cx="691" cy="739.500" r="105.500" />
    </g>
    <g stroke="#008000">
      {gridX.map(([n, x]) => <polygon key={n} points={bubble(x, 272)} />)}
      {rightY.map(([n, y]) => <polygon key={n} points={bubble(1570.5, y)} />)}
      {leftY.map(([n, y]) => <polygon key={n} points={bubble(427, y)} />)}
      <polygon points={bubble(796.5, 574.5)} />
    </g>
    <g fill="#fff">
      {gridX.map(([n, x]) => <text key={n} x={x} y="279">{n}</text>)}
      {rightY.map(([n, y]) => <text key={n} x="1570.500" y={y + 6.5}>{n}</text>)}
      {leftY.map(([n, y]) => <text key={n} x="427" y={y + 6.5}>{n}</text>)}
      <text x="796.500" y="580" fontSize="16" fontWeight="500">1/1</text>
      <text x="925.500" y="316">28200</text>
      {topDims.map(([n, x]) => <text key={n} x={x} y="367">{n}</text>)}
      {sideDims.map(([n, x, y]) => <text key={n} transform={`translate(${x} ${y}) rotate(-90)`}>{n}</text>)}
    </g>
  </Drawing>
);

const cube = (front: string, inner?: Glyph) => (
  <>
    <path d="M1 6L6 1h17v17l-5 5H1z" fill={front} stroke="#333d4a" />
    <path d="M1 6h17v17M18 6l5-5" fill="none" stroke="#333d4a" />
    {inner}
  </>
);

export default function App() {
  return (
    <Page>
      <Global />
      <TitleBar>
        <QuickBar>
          {['newDoc', 'open', 'save'].map(n => <QuickButton key={n} aria-label={n}><Icon name={n} /></QuickButton>)}
          <QuickButton aria-label="撤销"><Icon name="undo" /><Caret /></QuickButton>
          <QuickButton aria-label="恢复"><Icon name="redo" /><Caret $color="#b5b5b5" /></QuickButton>
          {['sum', 'calcView', 'find', 'glasses', 'brush', 'grid', 'docPlus'].map(n => <QuickButton key={n} aria-label={n}><Icon name={n} /></QuickButton>)}
          <QuickButton aria-label="自定义">
            <svg width="6" height="7" viewBox="0 0 6 7"><path d="M0 .5h6" stroke="#555" /><path d="M0 3h6L3 6.500z" fill="#555" /></svg>
          </QuickButton>
        </QuickBar>
        <AppTitle>广联达BIM土建计量平台 GTJ2021 - [128(20210312193820)]</AppTitle>
      </TitleBar>
      <TabBar>
        {['开始', '工程设置', '建模', '视图', '工具', '工程量', '云应用', '协同建模(限免)', 'IGMS'].map(n => (
          <Tab key={n} href="#" $active={n === '建模'}>{n}</Tab>
        ))}
        <HelpSearch>
          <input aria-label="搜索帮助" placeholder="答疑解惑，搜这里" />
          <Icon name="lensGray" size={12} />
        </HelpSearch>
        <Avatar viewBox="0 0 17 12" aria-hidden="true">
          <path d="M0 0h17v12H0z" fill="#3b1d18" />
          <path d="M2 3l4-2 3 3 4-3 4 3v4l-4-2-3 3-4-2-4 1z" fill="#a8402a" />
          <path d="M6 7l3-2 2 3-3 3zM12 8l4-1v3z" fill="#e6c3ae" />
        </Avatar>
      </TabBar>

      <Ribbon>
        <RibbonGroup $w={103}>
          <GroupTools $pad={0}>
            <CutButton aria-label="选择" />
            <Tools items={[t('picker', '拾取构件'), t('batch', '批量选择'), t('attr', '按属性选择')]} />
          </GroupTools>
          <GroupLabel $start>选择<Caret /></GroupLabel>
        </RibbonGroup>
        <RibbonGroup $w={194}>
          <GroupTools>
            <Tools w={79} items={[t('replace', '查找替换', 'x'), t('ratio', '设置比例', 'x'), t('restore', '还原CAD', 'x')]} />
            <Tools items={[t('floorTable', '识别楼层表', 'x'), t('cadOpt', 'CAD识别选项')]} />
          </GroupTools>
          <GroupLabel>CAD操作<Caret /></GroupLabel>
        </RibbonGroup>
        <RibbonGroup $w={276}>
          <GroupTools>
            <Tools w={66} items={[t('define', '定义'), t('cloud', '云检查'), t('lock', '锁定', 'm')]} />
            <Tools w={111} items={[t('copyFloor', '复制到其它层', 'm'), t('alignSlab', '自动平齐板', 'm'), t('twoPoint', '两点辅轴', 'm')]} />
            <Tools items={[t('length', '长度标注', 'm'), t('store', '图元存盘', 'm'), t('filter', '图元过滤', 'x')]} />
          </GroupTools>
          <GroupLabel>通用操作<Caret /></GroupLabel>
        </RibbonGroup>
        <RibbonGroup $w={237}>
          <GroupTools>
            <Tools w={54} items={[t('copy', '复制'), t('move', '移动'), t('mirror', '镜像')]} />
            <Tools w={54} items={[t('extend', '延伸'), t('trim', '修剪'), t('offset', '偏移')]} />
            <Tools w={54} items={[t('breakIt', '打断'), t('merge', '合并'), t('split', '分割', 'x')]} />
            <Tools items={[t('align', '对齐', 'm'), t('erase', '删除'), t('rotate', '旋转')]} />
          </GroupTools>
          <GroupLabel>修改<Caret /></GroupLabel>
        </RibbonGroup>
        <RibbonGroup $w={119}>
          <GroupTools $pad={6}>
            <Big w={40} icon="point" text="点" off />
            <Spacer $w={2} />
            <Big w={40} icon="line" text="直线" />
            <Spacer $w={4} />
            <Tools items={[t('arc', ''), t('circle', ''), t('rect', '')]} />
          </GroupTools>
          <GroupLabel>绘图<Caret /></GroupLabel>
        </RibbonGroup>
        <RibbonGroup $w={250}>
          <GroupTools $pad={6}>
            <Big w={44} icon="beamBig" text="识别梁" off />
            <Spacer $w={5} />
            <Tools w={102} items={[t('funnelCheck', '校核梁图元', 'x'), t('stampGray', '校核原位标注', 'x'), t('hangerFind', '识别吊筋', 'x')]} />
            <Tools items={[t('funnelBox', '识别梁构件', 'x'), t('editSeat', '编辑支座', 'x')]} />
          </GroupTools>
          <GroupLabel>识别梁</GroupLabel>
        </RibbonGroup>
        <RibbonGroup $w={516}>
          <GroupTools $pad={3}>
            <Big w={56} icon="smart" text="智能布置" menu />
            <Spacer $w={1} />
            <Tools w={88} items={[t('origMark', '原位标注', 'm'), t('respan', '重提梁跨', 'm'), t('checkElev', '查改标高')]} />
            <Tools w={103} items={[t('applySame', '应用到同名梁'), t('refresh', '刷新支座尺寸'), t('spanCopy', '梁跨数据复制')]} />
            <Tools w={89} items={[t('sideBar', '生成侧面筋'), t('erectBar', '生成架立筋'), t('archBeam', '设置拱梁', 'm')]} />
            <ToolColumn $w={99}>
              <ToolButton><Icon name="haunch" />生成梁加腋<Caret /></ToolButton>
              <ToolButton><Icon name="hanger" />生成吊筋</ToolButton>
              <ToolCheck><CheckBox type="checkbox" defaultChecked />显示吊筋</ToolCheck>
            </ToolColumn>
            <Tools items={[t('spanCls', '梁跨分类')]} />
          </GroupTools>
          <GroupLabel>梁二次编辑<Caret /></GroupLabel>
        </RibbonGroup>
      </Ribbon>

      <ContextBar>
        {[['楼层', ' ', 59], ['构件大类', '梁', 100], ['构件类型', '梁', 100], ['构件', 'KL-1', 100], ['分层', '分层1', 100]].map(([label, value, w]) => (
          <ComboWrap key={label as string} $w={w as number}>
            <ComboSelect aria-label={label as string}><option>{value}</option></ComboSelect>
            <Caret />
          </ComboWrap>
        ))}
      </ContextBar>

      <Body>
        <NavPanel>
          <DockStrip><Close /></DockStrip>
          <NavHead><NavTitle>导航树</NavTitle></NavHead>
          <NavTools>
            <ViewButton aria-label="列表视图"><Icon name="listView" size={14} /></ViewButton>
            <ViewButton aria-label="卡片视图"><Icon name="cardView" /></ViewButton>
          </NavTools>
          <NavBody>
            <NavList>
              {navRows.map((r, i) => (
                <NavRow key={i} $cat={!r.icon} $active={r.active}>
                  {r.icon && <Icon name={r.icon} />}
                  {r.text && <span>{r.text}</span>}
                  {r.vip && <Vip>VIP</Vip>}
                </NavRow>
              ))}
            </NavList>
            <ScrollThumb $top={14} $left={3} $h="64%" />
          </NavBody>
        </NavPanel>

        <MidColumn>
          <DockPanel $grow={397}>
            <DockStrip><Close /></DockStrip>
            <PanelTabs><PanelTab $active>构件列表</PanelTab><PanelTab>图纸管理</PanelTab></PanelTabs>
            <ListTools>
              <SplitButton>
                <button><Icon name="newItem" />新建</button>
                <button aria-label="新建选项"><Caret /></button>
              </SplitButton>
              <ListTool><Icon name="copyBlue" />复制</ListTool>
              <ListTool><Icon name="deleteRed" />删除</ListTool>
              <ListTool><Icon name="layerCopy" />层间复制</ListTool>
              <MoreButton aria-label="更多"><svg viewBox="0 0 8 6"><path d="M0 0l3 3-3 3zM4 0l3 3-3 3z" fill="#333" /></svg></MoreButton>
            </ListTools>
            <ListSearch><input aria-label="搜索构件" placeholder="搜索构件..." /><Icon name="lens" size={12} /></ListSearch>
            <Tree>
              <TreeRow $indent={10}><Twisty />梁</TreeRow>
              <TreeRow $indent={30}><Twisty />楼层框架梁</TreeRow>
              <TreeRow $indent={60}><TreeLeaf>KL-1</TreeLeaf></TreeRow>
            </Tree>
          </DockPanel>
          <DockPanel $grow={323}>
            <DockStrip><Close /></DockStrip>
            <PanelTabs><PanelTab $active>属性列表</PanelTab><PanelTab>图层管理</PanelTab></PanelTabs>
            <TableArea>
              <PropTable>
                <colgroup><col width="22" /><col width="101" /><col width="95" /><col width="41" /></colgroup>
                <thead><tr><th /><th>属性名称</th><th>属性值</th><th>附加</th></tr></thead>
                <tbody>
                  {props.map((p, i) => (
                    <tr key={p.name}>
                      <th scope="row">{i + 1}</th>
                      <PropName $plain={p.plain}>{p.name}</PropName>
                      <td>{p.value}</td>
                      <td>{!p.noBox && <CheckBox type="checkbox" aria-label={`附加 ${p.name}`} />}</td>
                    </tr>
                  ))}
                </tbody>
              </PropTable>
              <ScrollThumb $top={14} $left={4} $h="252px" />
            </TableArea>
          </DockPanel>
        </MidColumn>

        <Gutter><button aria-label="收起左侧"><svg viewBox="0 0 4 6"><path d="M4 0v6L0 3z" fill="currentColor" /></svg></button></Gutter>

        <Viewport>
          <FloorPlan />
          <ViewTools>
            <button aria-label="动态观察">
              <svg viewBox="0 0 24 24">
                <defs><radialGradient id="ball" cx=".35" cy=".3"><stop offset="0" stopColor="#eef3f8" /><stop offset="1" stopColor="#7d92aa" /></radialGradient></defs>
                <circle cx="12" cy="12" r="9.500" fill="url(#ball)" stroke="#4a5a6c" />
                <path d="M2 18c5 2 14-5 17-10" fill="none" stroke="#333d4a" strokeWidth="1.500" />
                <circle cx="20" cy="6" r="3.500" fill="#b9cbe0" stroke="#4a5a6c" /><circle cx="3" cy="18" r="2" fill="#777" stroke="#333d4a" />
              </svg>
            </button>
            <button aria-label="三维">
              <svg viewBox="0 0 24 24">{cube('#8096b0', <path d="M8 14.500h4v6H8M9 17.500h3M14 14.500h1.500c2 0 2 6 0 6H14z" fill="none" stroke="#26303c" />)}</svg>
            </button>
            <button aria-label="俯视"><svg viewBox="0 0 24 24">{cube('#cfe6fd', <path d="M6 6v12h12M6 18l-5 5" fill="none" stroke="#333d4a" />)}</svg><Caret $color="#26303c" /></button>
            <button aria-label="着色"><svg viewBox="0 0 24 24">{cube('#8096b0')}</svg><Caret $color="#26303c" /></button>
            <button aria-label="旋转视图">
              <svg viewBox="0 0 24 24"><path d="M20 7a10 10 0 1 0 1 9" fill="none" stroke="#333d4a" strokeWidth="2" /><path d="M22 2v7h-7z" fill="#333d4a" /></svg>
              <Caret $color="#26303c" />
            </button>
            <hr />
            <button aria-label="显示列表">
              <svg viewBox="0 0 24 24">
                <path d="M1 4l2-3h18l2 3v19H1zM1 4h22" fill="#8ea4bd" stroke="#333d4a" />
                <path d="M4 6l2 2 3-3M14 6l2 2 3-3M12 9v12" fill="none" stroke="#26303c" />
                <path d="M4 10h3v2H4zM4 14h3v2H4zM4 18h3v2H4zM15 10h3v2h-3zM15 14h3v2h-3zM15 18h3v2h-3z" fill="none" stroke="#26303c" />
                <path d="M8 11h2M8 15h2M8 19h2M19 11h2M19 15h2M19 19h2" stroke="#26303c" />
              </svg>
            </button>
          </ViewTools>
        </Viewport>

        <Gutter><button aria-label="收起右侧"><svg viewBox="0 0 4 6"><path d="M0 0v6l4-3z" fill="currentColor" /></svg></button></Gutter>

        <DisplayPanel>
          <DockStrip />
          <DisplayTitle>显示设置</DisplayTitle>
          <DisplayTabs><button>图元显示</button></DisplayTabs>
          <RadioRow><Radio type="radio" name="floor" defaultChecked />当前楼层</RadioRow>
          <DisplayTree>
            <DisplayRow $indent={7}><Twisty /><CheckBox type="checkbox" disabled $tone="#a8a8a8" />全部</DisplayRow>
            <DisplayRow $indent={44}><CheckBox type="checkbox" disabled $tone="#a8a8a8" aria-label="轴网" /></DisplayRow>
            <DisplayRow $indent={44}><CheckBox type="checkbox" disabled defaultChecked $tone="#a8a8a8" aria-label="梁" /></DisplayRow>
            <DisplayRow $indent={44}><CheckBox type="checkbox" disabled $tone="#a8a8a8" aria-label="板" /></DisplayRow>
          </DisplayTree>
        </DisplayPanel>
      </Body>

      <Annotation viewBox="0 0 1665 890" aria-hidden="true">
        <rect x="1499" y="67" width="99" height="24" fill="none" stroke="#ee1c24" strokeWidth="2" />
        <path d="M995.500 549.500L1481.500 117l-7.500-8 33-8-13 30-7.500-8L999 553.500z" fill="#ed1520" />
      </Annotation>
    </Page>
  );
}
